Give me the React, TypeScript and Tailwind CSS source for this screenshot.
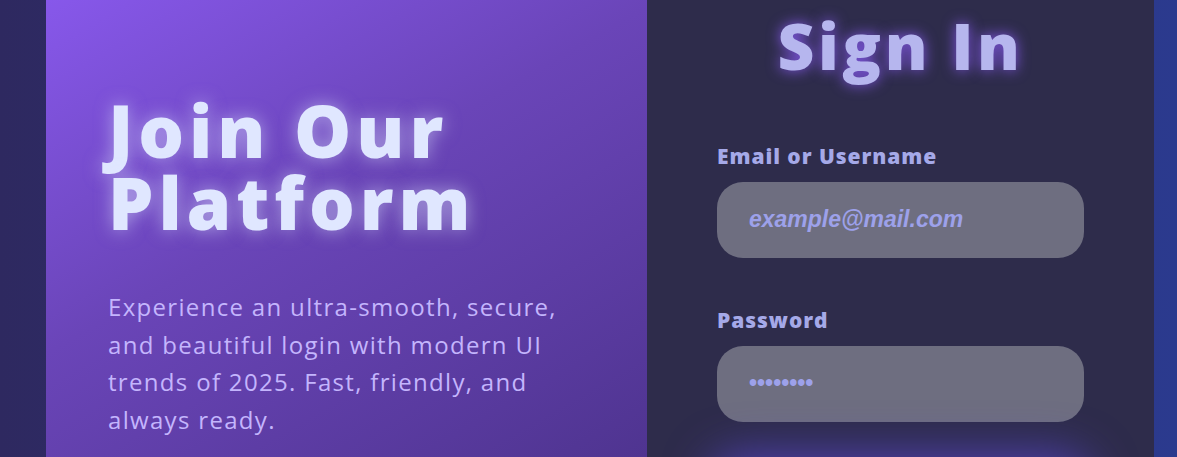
export default function App() {
  return (
    <div className="flex h-screen items-center overflow-hidden bg-[linear-gradient(90deg,#2e2960_0%,#2b3a8e_100%)] pl-[46px] font-['Open_Sans',sans-serif]">
      <div className="flex h-[621px] w-[1108px] shrink-0">
        {/* left: welcome panel */}
        <section className="w-[601px] shrink-0 bg-[linear-gradient(150deg,#8e5cf6_0%,#6a45b8_45%,#4a3189_100%)] pl-[62px] pt-[176px]">
          <h1 className="max-w-[440px] text-[72px] font-extrabold leading-none tracking-[0.068em] text-[#e0e7ff] [text-shadow:0_0_18px_rgba(224,231,255,0.55)]">
            Join Our Platform
          </h1>
          <p className="mt-[50px] w-[480px] text-[24px] leading-[37.5px] tracking-[0.055em] text-[#c4b5fd]">
            Experience an ultra-smooth, secure, and beautiful login with modern UI trends of 2025. Fast, friendly, and always ready.
          </p>
        </section>

        {/* right: sign in form */}
        <section className="min-w-0 flex-1 bg-[#2e2c4b] px-[70px] pt-[90px]">
          <h2 className="text-center text-[64px] font-extrabold leading-[1.2] tracking-[0.055em] text-[#b6b6ee] [text-shadow:0_0_14px_rgba(139,92,246,0.9)]">
            Sign In
          </h2>
          <form className="mt-[57px] flex flex-col">
            <label className="mb-3 text-[21px] font-extrabold leading-7 tracking-[0.045em] text-[#a5a9e8]">Email or Username</label>
            <input
              type="text"
              placeholder="example@mail.com"
              className="h-[76px] w-full rounded-[26px] bg-[#6e6e80] px-8 font-['Liberation_Sans',sans-serif] text-[23px] font-bold italic text-[#e0e7ff] outline-none placeholder:text-[#9da1ea]"
            />
            <label className="mb-3 mt-12 text-[21px] font-extrabold leading-7 tracking-[0.045em] text-[#a5a9e8]">Password</label>
            <input
              type="password"
              placeholder="••••••••"
              className="h-[76px] w-full rounded-[26px] bg-[#6e6e80] px-8 font-['Liberation_Sans',sans-serif] text-[23px] font-bold text-[#e0e7ff] outline-none placeholder:text-[#9da1ea]"
            />
            <button
              type="button"
              className="mt-10 h-[70px] rounded-[26px] bg-[linear-gradient(90deg,#6d4ee8,#5b5bf0)] text-[22px] font-bold text-white shadow-[0_0_45px_8px_rgba(92,72,220,0.7)]"
            >
              Sign In
            </button>
          </form>
        </section>
      </div>
    </div>
  );
}
